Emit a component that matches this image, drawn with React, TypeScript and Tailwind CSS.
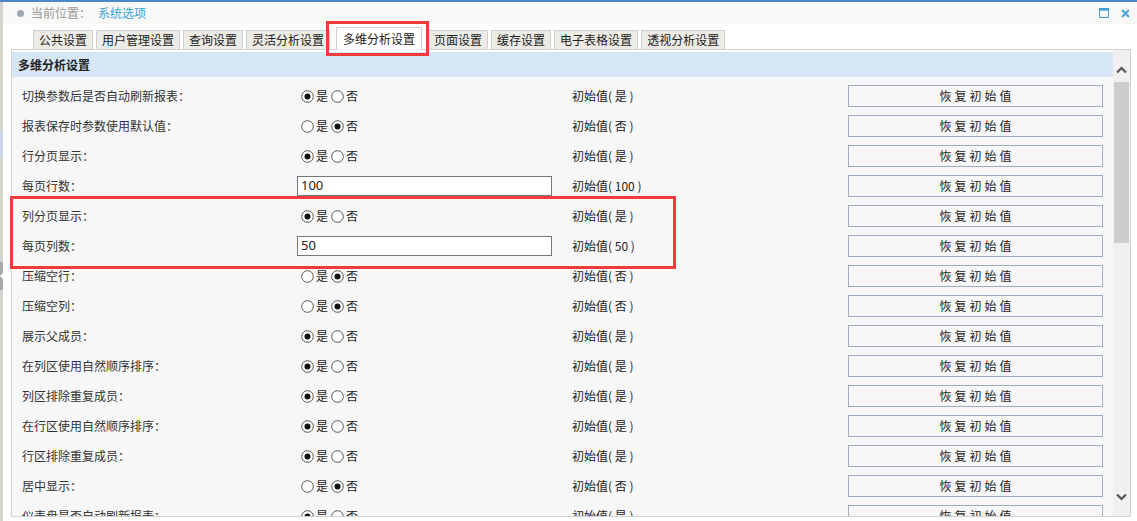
import React from "react";

const FONT = { fontFamily: '"Noto Sans CJK SC", "Microsoft YaHei", sans-serif' };

type Row =
  | { label: string; kind: "radio"; yes: boolean; init: string }
  | { label: string; kind: "input"; value: string; init: string };

const rows: Row[] = [
  { label: "切换参数后是否自动刷新报表：", kind: "radio", yes: true, init: "是" },
  { label: "报表保存时参数使用默认值：", kind: "radio", yes: false, init: "否" },
  { label: "行分页显示：", kind: "radio", yes: true, init: "是" },
  { label: "每页行数：", kind: "input", value: "100", init: "100" },
  { label: "列分页显示：", kind: "radio", yes: true, init: "是" },
  { label: "每页列数：", kind: "input", value: "50", init: "50" },
  { label: "压缩空行：", kind: "radio", yes: false, init: "否" },
  { label: "压缩空列：", kind: "radio", yes: false, init: "否" },
  { label: "展示父成员：", kind: "radio", yes: true, init: "是" },
  { label: "在列区使用自然顺序排序：", kind: "radio", yes: true, init: "是" },
  { label: "列区排除重复成员：", kind: "radio", yes: true, init: "是" },
  { label: "在行区使用自然顺序排序：", kind: "radio", yes: true, init: "是" },
  { label: "行区排除重复成员：", kind: "radio", yes: true, init: "是" },
  { label: "居中显示：", kind: "radio", yes: false, init: "否" },
  { label: "仪表盘是否自动刷新报表：", kind: "radio", yes: true, init: "是" },
];

const tabs = ["公共设置", "用户管理设置", "查询设置", "灵活分析设置", "多维分析设置", "页面设置", "缓存设置", "电子表格设置", "透视分析设置"];

function Radio({ on }: { on: boolean }) {
  return (
    <svg width="13" height="13" viewBox="0 0 13 13" className="shrink-0">
      <circle cx="6.5" cy="6.5" r="5.8" fill="#fff" stroke="#555" strokeWidth="1" />
      {on && <circle cx="6.5" cy="6.5" r="3" fill="#111" />}
    </svg>
  );
}

function Chevron({ up }: { up: boolean }) {
  return (
    <svg width="11" height="8" viewBox="0 0 11 8">
      <path d={up ? "M1 6.5 L5.5 2 L10 6.5" : "M1 1.5 L5.5 6 L10 1.5"} fill="none" stroke="#555" strokeWidth="2.2" />
    </svg>
  );
}

export default function App() {
  return (
    <div className="relative w-[1137px] h-[521px] overflow-hidden bg-[#f3f3f3] text-[12px] text-[#222]" style={FONT}>
      <div className="h-[2px] bg-[#4b88c8]" />
      <div className="flex h-[519px]">
        {/* left strip */}
        <div className="w-[3px] flex flex-col bg-[#d6d3cd]">
          <div className="h-[128px]" />
          <div className="h-[28px] bg-[#c7d6e6]" />
          <div className="h-[104px]" />
          <div className="h-[28px] bg-[#a9a9a9] flex items-center justify-center">
            <div className="w-0 h-0 border-y-[3px] border-y-transparent border-r-[3px] border-r-white" />
          </div>
        </div>
        <div className="flex-1 flex flex-col">
          {/* header */}
          <div className="h-[22px] bg-[#f8f8f7] flex items-center pl-[14px] pr-[6px]">
            <div className="w-[7px] h-[7px] rounded-full bg-[#9ba6b2]" />
            <span className="ml-[7px] text-[#9a9a9a]">当前位置：</span>
            <span className="ml-[7px] text-[#3aa2d8]">系统选项</span>
            <div className="flex-1" />
            <svg width="10" height="10" viewBox="0 0 10 10">
              <rect x="0.5" y="0.5" width="9" height="9" fill="none" stroke="#4aa3d8" strokeWidth="1" />
              <rect x="0.5" y="0.5" width="9" height="2.2" fill="#4aa3d8" />
            </svg>
            <svg width="9" height="9" viewBox="0 0 9 9" className="ml-[12px] mr-[1px]">
              <path d="M1 1 L8 8 M8 1 L1 8" stroke="#4aa3d8" strokeWidth="2" />
            </svg>
          </div>
          <div className="flex-1 bg-white flex flex-col pl-[8px] pr-[6px]">
            {/* tabs */}
            <div className="h-[25px] flex items-end pl-[22px] gap-[3px] relative z-10">
              {tabs.map((t) =>
                t === "多维分析设置" ? (
                  <div key={t} className="h-[23px] -mb-[1px] px-[6px] bg-white border border-[#cfcfcf] border-b-0 flex items-center mx-[3px]">
                    {t}
                  </div>
                ) : (
                  <div key={t} className="h-[19px] px-[5px] bg-[#ecebe6] border border-[#cfcfcf] border-b-0 flex items-center">
                    {t}
                  </div>
                )
              )}
            </div>
            {/* panel */}
            <div className="h-[468px] border border-[#d2d2d2] bg-white flex">
              <div className="flex-1 flex flex-col pt-[2px] overflow-hidden">
                <div className="h-[25px] shrink-0 bg-[#d6e6f5] flex items-center pl-[6px] font-bold">多维分析设置</div>
                <div className="flex-1 bg-[#f7f7f7] pt-[4px] overflow-hidden">
                  {rows.map((r, i) => (
                    <div key={i} className="h-[30px] flex items-center">
                      <div className="w-[285px] pl-[10px] text-[#333]">{r.label}</div>
                      <div className="w-[275px] flex items-center">
                        {r.kind === "radio" ? (
                          <div className="flex items-center pl-[4px]">
                            <Radio on={r.yes} />
                            <span className="ml-[2px] mr-[3px]">是</span>
                            <Radio on={!r.yes} />
                            <span className="ml-[2px]">否</span>
                          </div>
                        ) : (
                          <div className="w-[255px] h-[20px] border border-[#777] bg-white flex items-center pl-[3px] text-[13px]" style={{ fontFamily: '"Noto Sans", sans-serif' }}>
                            {r.value}
                          </div>
                        )}
                      </div>
                      <div className="w-[276px] whitespace-pre">初始值( {r.init} )</div>
                      <div className="w-[255px] h-[22px] border border-[#9dadbf] flex items-center justify-center tracking-[3px] pl-[3px]">
                        恢复初始值
                      </div>
                    </div>
                  ))}
                </div>
              </div>
              {/* scrollbar */}
              <div className="w-[17px] bg-[#f0f0f0] flex flex-col items-center pt-[2px]">
                <div className="h-[30px] flex items-center justify-center pt-[6px]">
                  <Chevron up />
                </div>
                <div className="w-[15px] h-[161px] bg-[#cdcdcd]" />
                <div className="flex-1" />
                <div className="h-[30px] flex items-center justify-center pb-[8px]">
                  <Chevron up={false} />
                </div>
              </div>
            </div>
          </div>
        </div>
      </div>
      {/* highlight boxes */}
      <div className="absolute left-[326px] top-[21px] w-[103px] h-[35px] border-[3px] border-[#f03b3b] z-20" />
      <div className="absolute left-[10px] top-[196px] w-[666px] h-[73px] border-[3px] border-[#f03b3b] z-20" />
    </div>
  );
}
